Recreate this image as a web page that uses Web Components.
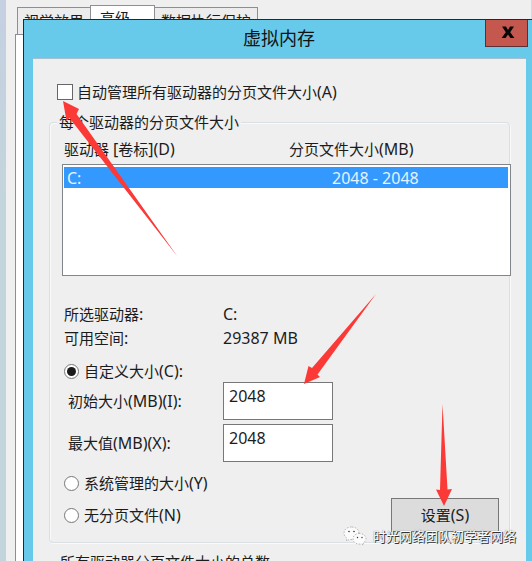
<!DOCTYPE html>
<html lang="zh-CN"><head><meta charset="utf-8"><title>虚拟内存</title>
<style>html,body{margin:0;height:100%;overflow:hidden;background:#efefef}</style></head>
<body><memory-page></memory-page>
<script>
const FONT = '"Noto Sans","Noto Sans CJK SC",sans-serif';
const def = (name, html) => customElements.define(name, class extends HTMLElement {
  constructor() {
    super();
    const t = document.createElement('template');
    t.innerHTML = html;
    this.attachShadow({mode: 'open'}).append(t.content.cloneNode(true));
  }
});

def('ui-text', `<style>:host{display:inline-block;white-space:pre;font-size:15px;line-height:24px;height:24px;color:var(--ink,#1c1c1c)}slot{display:inline}::slotted(i){font-style:normal;font-size:16px;line-height:20px}</style><slot></slot>`);

def('tab-item', `<style>:host{display:block;box-sizing:border-box;border:1px solid #8d8e96;border-bottom:0;padding-left:6px;height:27px;margin-top:2px;margin-left:-1px;background:#ececec}
:host([active]){background:#fff;height:29px;margin-top:0;padding-left:9px}</style><slot></slot>`);

def('back-window', `<style>
:host{display:flex;width:532px;height:561px}
.edge{width:6px;background:linear-gradient(#c5d0e2,#c3d5dc 35%)}
.main{flex:1;padding:5px 0 0 9px;box-sizing:border-box;border-right:1px solid #cddbe3}
.tabs{display:flex;padding-left:3px;align-items:flex-start}
.panel{height:600px;background:#fff;border:1px solid #8d8e96;border-width:1px 0 0 1px}
tab-item ui-text{line-height:26px}
tab-item[active] ui-text{line-height:25px}
</style><div class="edge"></div><div class="main"><div class="tabs">
<tab-item style="width:74px"><ui-text>视觉效果</ui-text></tab-item><tab-item active style="width:65px"><ui-text>高级</ui-text></tab-item><tab-item style="width:104px"><ui-text>数据执行保护</ui-text></tab-item></div><div class="panel"></div></div>`);

def('close-button', `<style>:host{display:flex;box-sizing:border-box;width:43px;height:27px;background:#c4584f;border:1px solid #583036;border-top:0;align-items:center;justify-content:center}svg{margin-top:-1px;margin-left:2px}</style>
<svg width="14" height="13" viewBox="0 0 14 13"><path d="M1 .5h4l2 3.400 2-3.400h4L9.200 6.300 13.400 12h-4L7 8.600 4.600 12h-4l4.200-5.700z" fill="#080808"/></svg>`);

def('check-box', `<style>:host{display:flex;align-items:center;height:24px;gap:4px}b{box-sizing:border-box;width:16px;height:16px;border:1px solid #666;background:#fff}</style><b></b><slot></slot>`);

def('radio-item', `<style>:host{display:flex;align-items:center;height:24px;gap:5px}b{box-sizing:border-box;width:15px;height:15px;border:1px solid #777;border-radius:50%;background:#fff;display:grid;place-items:center}
:host([checked]) b::after{content:"";width:9px;height:9px;border-radius:50%;background:#1b1b1b}</style><b></b><slot></slot>`);

def('text-field', `<style>:host{display:block;box-sizing:border-box;width:110px;height:38px;border:1px solid #777;background:#fff;padding:1px 0 0 5px}</style><ui-text><i><slot></slot></i></ui-text>`);

def('push-button', `<style>:host{display:flex;box-sizing:border-box;width:108px;height:34px;border:1px solid #777;background:#dcdcdc;justify-content:center;align-items:center}</style><slot></slot>`);

def('group-box', `<style>:host{display:block;box-sizing:border-box;border:1px solid #d9dfe2;border-radius:4px;box-shadow:inset 1px 1px #fafafa,1px 1px #fafafa}
.t{margin:-12px 0 0 7px;height:24px;width:max-content;background:#efefef;padding:0 2px}</style><div class="t"><slot name="title"></slot></div><slot></slot>`);

def('drive-list', `<style>:host{display:block;box-sizing:border-box;width:449px;height:112px;border:1px solid #81858c;background:#fff;padding:2px 2px 0 1px}
.row{height:21px;background:#3399fe;display:grid;grid-template-columns:265px 1fr;align-items:center;--ink:#e4f3ff;padding-left:3px}ui-text{height:22px;line-height:22px}</style>
<div class="row"><ui-text><i>C:</i></ui-text><ui-text><i>2048 - 2048</i></ui-text></div>`);

def('memory-dialog', `<style>
:host{display:block;box-sizing:border-box;width:520px;height:560px;background:#67caea;border:1px solid #24292c}
header{display:grid;grid-template-columns:1fr 43px 14px;height:38px}
h1{margin:0;font-size:18px;line-height:36px;font-weight:400;color:#111;padding-left:219px}
.body{margin-left:9px;width:493px;height:503px;background:#efefef;box-sizing:border-box;border-top:1px solid #a8bec8;padding-top:21px}
check-box{margin-left:24px}
group-box{margin:18px 0 0 16px;width:461px;height:421px}
.in{margin-left:12px}
.head{display:grid;grid-template-columns:225px 1fr;padding:2px 0 3px 2px}
.info{display:grid;grid-template-columns:159px 1fr;padding:26px 0 10px 2px}
.fld{display:grid;grid-template-columns:155px 1fr;padding-left:6px;margin-bottom:4px;align-items:center}
.foot{display:flex;justify-content:space-between;padding:5px 10px 0 2px}
.foot radio-item+radio-item{margin-top:8px}
push-button{margin-top:27px}
.next{padding:7px 0 0 27px}
</style>
<header><h1>虚拟内存</h1><close-button></close-button></header>
<div class="body"><check-box><ui-text>自动管理所有驱动器的分页文件大小<i>(A)</i></ui-text></check-box>
<group-box><ui-text slot="title" style="line-height:22px">每个驱动器的分页文件大小</ui-text><div class="in">
<div class="head"><ui-text>驱动器 <i>[</i>卷标<i>](D)</i></ui-text><ui-text>分页文件大小<i>(MB)</i></ui-text></div>
<drive-list></drive-list>
<div class="info"><ui-text>所选驱动器<i>:</i></ui-text><ui-text><i>C:</i></ui-text><ui-text>可用空间<i>:</i></ui-text><ui-text><i>29387 MB</i></ui-text></div>
<radio-item checked style="margin-left:2px;height:22px"><ui-text>自定义大小<i>(C):</i></ui-text></radio-item>
<div class="fld"><ui-text>初始大小<i>(MB)(I):</i></ui-text><text-field>2048</text-field></div>
<div class="fld"><ui-text>最大值<i>(MB)(X):</i></ui-text><text-field>2048</text-field></div>
<div class="foot"><div><radio-item><ui-text>系统管理的大小<i>(Y)</i></ui-text></radio-item><radio-item><ui-text>无分页文件<i>(N)</i></ui-text></radio-item></div><push-button><ui-text>设置<i>(S)</i></ui-text></push-button></div>
</div></group-box>
<div class="next"><ui-text>所有驱动器分页文件大小的总数</ui-text></div></div>`);

def('red-arrows', `<style>:host{display:block;pointer-events:none}</style>
<svg width="532" height="561" fill="#fb3936"><path d="M63 101L79 109 76.500 114 177.500 256.500 69.500 118 66.500 121z"/><path d="M304 384L308.500 366 312 368 376 294 317.500 374.500 320 377z"/><path d="M444 506L436 489.500 440 490 442.500 404 447.500 489.500 452 489z"/></svg>`);

def('channel-mark', `<style>:host{display:flex;align-items:center;gap:6px;--ink:#fff}ui-text{font-size:13px;text-shadow:1px 1px 0 #333,0 0 1px #555}</style>
<svg width="24" height="20" viewBox="0 0 24 20"><g fill="#fbfbfb" stroke="#888" stroke-width=".6" stroke-dasharray="1.500 1.500"><path d="M8.500 1C4 1 1 3.700 1 7.200c0 2 1.200 3.800 3 5L3.500 15l3-1.700c5 1.200 9.500-1.700 9.500-6C16 3.500 12.700 1 8.500 1z"/><path d="M16.500 7.500c-4 0-6.500 2.400-6.500 5.400 0 3.400 3.800 6 8.200 5l2.400 1.300-.5-2.200c1.800-1.200 2.900-2.500 2.900-4.200 0-3-2.700-5.300-6.500-5.300z"/></g><g fill="#333"><circle cx="6" cy="5.500" r=".8"/><circle cx="11" cy="5.500" r=".8"/><circle cx="14.500" cy="11.500" r=".7"/><circle cx="19" cy="11.500" r=".7"/></g></svg><ui-text><slot></slot></ui-text>`);

def('memory-page', `<style>:host{display:block;position:relative;width:532px;height:561px;overflow:hidden;font-family:${FONT}}
memory-dialog{position:absolute;left:23px;top:19px}red-arrows{position:absolute;left:0;top:0}channel-mark{position:absolute;left:343px;top:524px}</style>
<back-window></back-window><memory-dialog></memory-dialog><red-arrows></red-arrows><channel-mark>时光网络团队初学者网络</channel-mark>`);
</script></body></html>
